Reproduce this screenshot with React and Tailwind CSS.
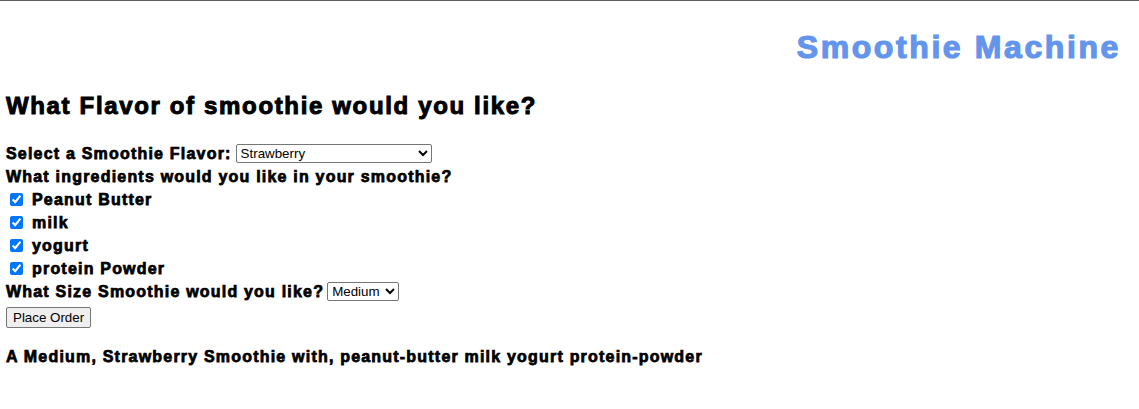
import React from "react";

export default function App() {
  const ingredients = ["Peanut Butter", "milk", "yogurt", "protein Powder"];
  return (
    <div
      className="min-h-[409px] w-full border-t border-[#5f5f5f] bg-white text-black"
      style={{ fontFamily: '"Liberation Sans", Arial, sans-serif' }}
    >
      <div className="flex justify-end pr-[18px] pt-[28px]">
        <h1 className="text-[32px] leading-[37px] font-bold tracking-[2.6px] [-webkit-text-stroke-width:1.2px] text-[#6495ED]">
          Smoothie Machine
        </h1>
      </div>
      <div className="pl-[6px]">
        <h2 className="mt-[26px] text-[24px] leading-[28px] font-bold tracking-[1.65px] [-webkit-text-stroke-width:1px]">
          What Flavor of smoothie would you like?
        </h2>
        <div className="mt-[22px] flex flex-col text-[16px] font-bold leading-[23px]">
          <div className="flex items-center h-[23px]">
            <span className="tracking-[1.2px] [-webkit-text-stroke-width:0.75px]">Select a Smoothie Flavor:</span>
            <select
              defaultValue="Strawberry"
              className="ml-[4px] h-[19px] w-[196px] rounded-[2px] border border-[#767676] bg-white text-[13.33px] font-normal leading-[15px] text-black"
            >
              <option>Strawberry</option>
              <option>Banana</option>
              <option>Mango</option>
              <option>Blueberry</option>
            </select>
          </div>
          <div className="h-[23px] tracking-[1.2px] [-webkit-text-stroke-width:0.75px]">
            What ingredients would you like in your smoothie?
          </div>
          {ingredients.map((ing) => (
            <label key={ing} className="flex items-center h-[23px]">
              <input type="checkbox" defaultChecked className="ml-[4px] mr-[3px] h-[13px] w-[13px]" />
              <span className="ml-[6px] tracking-[1.2px] [-webkit-text-stroke-width:0.75px]">{ing}</span>
            </label>
          ))}
          <div className="flex items-center h-[23px]">
            <span className="tracking-[1.2px] [-webkit-text-stroke-width:0.75px]">What Size Smoothie would you like?</span>
            <select
              defaultValue="Medium"
              className="ml-[3px] h-[19px] w-[72px] rounded-[2px] border border-[#767676] bg-white text-[13.33px] font-normal leading-[15px] text-black"
            >
              <option>Small</option>
              <option>Medium</option>
              <option>Large</option>
            </select>
          </div>
          <div className="mt-[2px]">
            <button className="h-[21px] rounded-[2px] border border-[#767676] bg-[#efefef] px-[6px] text-[13.33px] font-normal leading-[15px] text-black">
              Place Order
            </button>
          </div>
          <div className="mt-[17px] h-[23px] tracking-[1.2px] [-webkit-text-stroke-width:0.75px]">
            A Medium, Strawberry Smoothie with, peanut-butter milk yogurt protein-powder
          </div>
        </div>
      </div>
    </div>
  );
}
